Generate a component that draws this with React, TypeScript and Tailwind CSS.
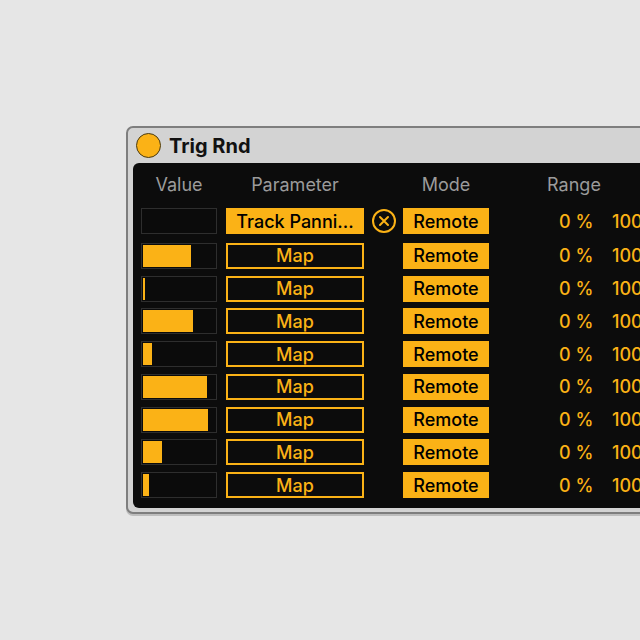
import React from "react";

interface RowData {
  fill: number;
  param?: string;
}

const rows: RowData[] = [
  { fill: 0, param: "Track Panni..." },
  { fill: 48 },
  { fill: 1.5 },
  { fill: 50 },
  { fill: 9 },
  { fill: 64 },
  { fill: 65 },
  { fill: 19 },
  { fill: 6 },
];

const ClearIcon: React.FC = () => (
  <svg width="26" height="26" viewBox="0 0 26 26" className="shrink-0">
    <circle cx="13" cy="13" r="11" fill="none" stroke="#fbb216" strokeWidth="2" />
    <path d="M9 9 L17 17 M17 9 L9 17" stroke="#fbb216" strokeWidth="2" strokeLinecap="round" />
  </svg>
);

const Row: React.FC<{ row: RowData; first: boolean }> = ({ row, first }) => (
  <div className={`flex h-[26px] items-center font-medium ${first ? "mb-[2.2px]" : ""}`}>
    {/* value meter */}
    <div className="relative h-[26px] w-[76px] shrink-0 border border-[#2e2e2e] bg-[#0b0b0b]">
      <div
        className="absolute left-[1px] top-[1px] bottom-[1px] bg-[#fbb216]"
        style={{ width: row.fill }}
      />
    </div>
    {/* parameter */}
    {row.param ? (
      <div className="ml-[9px] flex h-[26px] w-[138px] shrink-0 items-center justify-center bg-[#fbb216] text-[18px] text-black">
        {row.param}
      </div>
    ) : (
      <div className="ml-[9px] flex h-[26px] w-[138px] shrink-0 items-center justify-center border-2 border-[#fbb216] text-[18px] text-[#fbb216]">
        Map
      </div>
    )}
    <div className="flex w-[39px] shrink-0 justify-center">{row.param ? <ClearIcon /> : null}</div>
    {/* mode */}
    <div className="flex h-[26px] w-[86px] shrink-0 items-center justify-center bg-[#fbb216] text-[18px] text-black">
      Remote
    </div>
    {/* range */}
    <div className="ml-[70px] w-[33px] shrink-0 text-[18px] whitespace-nowrap text-[#fbb216]">0 %</div>
    <div className="ml-[20px] shrink-0 text-[18px] whitespace-nowrap text-[#fbb216]">100 %</div>
  </div>
);

export default function App() {
  return (
    <div
      className="h-[640px] w-[640px] overflow-hidden bg-[#e6e6e6] pl-[126px] pt-[126px]"
      style={{ fontFamily: "Inter, 'Noto Sans', sans-serif" }}
    >
      <div className="w-[620px] rounded-[7px] border-2 border-[#7e7e7e] bg-[#d3d3d3] pb-[4px] pl-[5px] shadow-[0_2px_0_#bdbdbd]">
        {/* title bar */}
        <div className="flex h-[35px] items-center gap-[8px] pl-[3px]">
          <div className="h-[25px] w-[25px] rounded-full border-[1.5px] border-[#4a3a10] bg-[#fbb216]" />
          <span className="text-[20px] font-bold text-[#111]">Trig Rnd</span>
        </div>
        {/* device body */}
        <div className="rounded-l-[6px] bg-[#0c0c0c] pb-[10px] pl-[8px] pt-[2px]">
          <div className="flex h-[38px] items-center text-[18px] text-[#9b9b9b]">
            <div className="w-[76px] text-center">Value</div>
            <div className="ml-[9px] w-[138px] text-center">Parameter</div>
            <div className="ml-[39px] w-[86px] text-center">Mode</div>
            <div className="ml-[57px] w-[56px] text-center">Range</div>
          </div>
          <div className="mt-[5px] flex flex-col gap-[6.75px]">
            {rows.map((row, i) => (
              <Row key={i} row={row} first={i === 0} />
            ))}
          </div>
        </div>
      </div>
    </div>
  );
}
